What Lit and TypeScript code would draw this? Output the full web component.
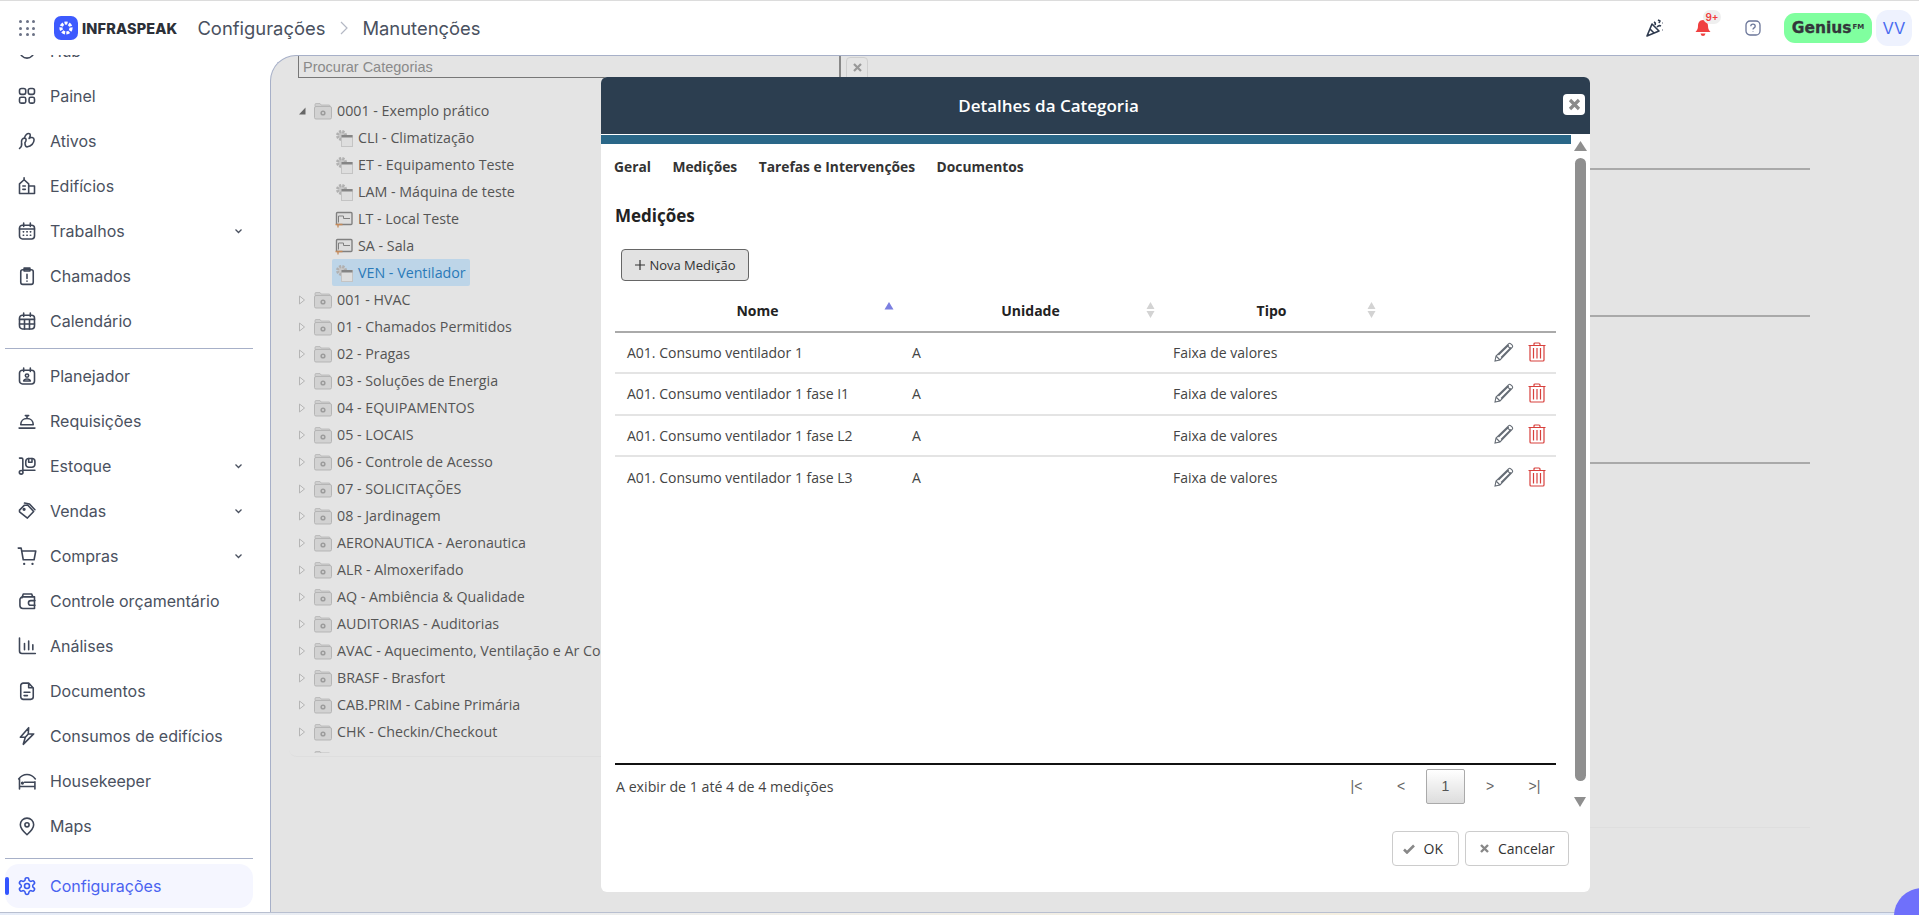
import { LitElement, html, css, svg } from "lit";
import { customElement } from "lit/decorators.js";

const ic = (d: unknown) => html`<svg class="ni" viewBox="0 0 24 24" fill="none" stroke="currentColor" stroke-width="1.9" stroke-linecap="round" stroke-linejoin="round">${d}</svg>`;

const icons: Record<string, unknown> = {
  hub: svg`<circle cx="12" cy="12" r="8.500"/>`,
  painel: svg`<rect x="3" y="3" width="7.500" height="7" rx="2.500"/><rect x="13.500" y="3" width="7.500" height="7" rx="2.500"/><rect x="3" y="13.500" width="7.500" height="7" rx="2"/><rect x="14.500" y="13.500" width="6.500" height="7" rx="2"/>`,
  ativos: svg`<path d="M3 21c2.500-2 3-4.500 2.500-7-.5-3 1-5.500 3.500-5.500 2.500 0 2.500 3 .5 5.500M9 8c1-3 3-5 5-5 2.500 0 2.500 3 .5 6M14.500 9c2-2 6-1.500 6 1.500 0 4-3.500 8-8 8.500-2 0-3-2-3-5"/>`,
  edificios: svg`<path d="M3 21V9.500l5.500-5 5.500 5V21zM14 12h7v9h-7M7 12h3M7 16h3M8.500 4.500V2"/>`,
  trabalhos: svg`<rect x="3" y="5" width="18" height="16.500" rx="3.500"/><path d="M8 2.500v4M16 2.500v4M3 9.500h18M7.500 13h.5M11.800 13h.5M16 13h.5M7.500 17h.5M11.800 17h.5M16 17h.5"/>`,
  chamados: svg`<rect x="4.500" y="4.500" width="15" height="17.500" rx="2.500"/><path d="M8.500 2.500h7v3.500h-7zM12 10v5M12 18v.2"/>`,
  calendario: svg`<rect x="3" y="5" width="18" height="16.500" rx="3.500"/><path d="M8 2.500v4M16 2.500v4M3 10h18M3 15.500h18M9 10v11.500M15 10v11.500"/>`,
  planejador: svg`<rect x="3" y="5" width="18" height="16.500" rx="3.500"/><path d="M8 2.500v4M16 2.500v4"/><circle cx="12" cy="11.500" r="2"/><path d="M8 18c.5-2 2-2.500 4-2.500s3.500.5 4 2.500z"/>`,
  requisicoes: svg`<path d="M4.500 16.500c0-4.500 3-7.500 7.500-7.500s7.500 3 7.500 7.500zM2.500 20.500h19M12 9V6M10 5.500h4"/>`,
  estoque: svg`<path d="M3 2.500h2.500c1 0 1.500.5 1.500 1.500v12.500M7 17h14.500"/><circle cx="5" cy="19.500" r="2.200"/><rect x="10.500" y="3" width="11" height="10.500" rx="3.500"/><path d="M14 3v4.500h4V3"/>`,
  vendas: svg`<path d="M3 11l6-6h4l7 7.500-7.500 8L3 13zM9 2.500l6 1 6.500 7"/><circle cx="8.500" cy="10" r="1"/>`,
  compras: svg`<path d="M1.500 2.500H5l2.500 14h13l2-10.500H5.800"/><path d="M8.500 21.500h.2M18.500 21.500h.2" stroke-width="2.600"/>`,
  controle: svg`<path d="M21 7H7a3.500 3.500 0 0 0-3.500 3.500v7A3.500 3.500 0 0 0 7 21h14zM6 8l1.500-4.500h10L19 7"/><path d="M21.500 11.500h-5a2.500 2.500 0 0 0 0 5.500h5"/>`,
  analises: svg`<path d="M3 2.500V18a3 3 0 0 0 3 3h16M9 9v7.500M14 6v10.500M19 10.500v6"/>`,
  documentos: svg`<path d="M4.500 5.500a3 3 0 0 1 3-3H14l5.500 6V19a3 3 0 0 1-3 3h-9a3 3 0 0 1-3-3zM14 2.500V8h5.500M8.500 13.500h7M8.500 17.500h4"/>`,
  consumos: svg`<path d="M14 2L4 13.500h6l-2.500 8.500L20 9.500h-6.500zM10 13.500l3.500-4" />`,
  housekeeper: svg`<path d="M2 9.500c5.500-7 14.500-7 20 0M3 9v12.500M3 18.500h18.500v3M21.500 13v5.500M9 13.500h12.500"/><circle cx="6.500" cy="14.500" r="1"/>`,
  maps: svg`<path d="M12 22.500c-4.500-4-8-7.500-8-12a8 8 0 0 1 16 0c0 4.500-3.500 8-8 12z"/><circle cx="12" cy="10.500" r="2.500"/>`,
  config: svg`<path d="M12.220 2h-.44a2 2 0 0 0-2 2v.18a2 2 0 0 1-1 1.730l-.43.250a2 2 0 0 1-2 0l-.15-.08a2 2 0 0 0-2.730.730l-.22.380a2 2 0 0 0 .730 2.730l.15.100a2 2 0 0 1 1 1.720v.510a2 2 0 0 1-1 1.740l-.15.090a2 2 0 0 0-.730 2.730l.22.380a2 2 0 0 0 2.730.730l.15-.08a2 2 0 0 1 2 0l.43.250a2 2 0 0 1 1 1.730V20a2 2 0 0 0 2 2h.44a2 2 0 0 0 2-2v-.18a2 2 0 0 1 1-1.730l.43-.25a2 2 0 0 1 2 0l.15.08a2 2 0 0 0 2.730-.730l.22-.390a2 2 0 0 0-.730-2.730l-.15-.08a2 2 0 0 1-1-1.740v-.5a2 2 0 0 1 1-1.740l.15-.09a2 2 0 0 0 .730-2.730l-.22-.38a2 2 0 0 0-2.730-.730l-.15.08a2 2 0 0 1-2 0l-.43-.25a2 2 0 0 1-1-1.730V4a2 2 0 0 0-2-2z"/><circle cx="12" cy="12" r="3"/>`,
};

const navTop: [string, string, boolean?][] = [
  ["painel", "Painel"], ["ativos", "Ativos"], ["edificios", "Edifícios"], ["trabalhos", "Trabalhos", true], ["chamados", "Chamados"], ["calendario", "Calendário"],
];
const navMid: [string, string, boolean?][] = [
  ["planejador", "Planejador"], ["requisicoes", "Requisições"], ["estoque", "Estoque", true], ["vendas", "Vendas", true], ["compras", "Compras", true], ["controle", "Controle orçamentário"], ["analises", "Análises"], ["documentos", "Documentos"], ["consumos", "Consumos de edifícios"], ["housekeeper", "Housekeeper"], ["maps", "Maps"],
];

const children: [string, string, boolean?][] = [
  ["gear", "CLI - Climatização"], ["gear", "ET - Equipamento Teste"], ["gear", "LAM - Máquina de teste"], ["map", "LT - Local Teste"], ["map", "SA - Sala"], ["gear", "VEN - Ventilador", true],
];
const roots = ["001 - HVAC", "01 - Chamados Permitidos", "02 - Pragas", "03 - Soluções de Energia", "04 - EQUIPAMENTOS", "05 - LOCAIS", "06 - Controle de Acesso", "07 - SOLICITAÇÕES", "08 - Jardinagem", "AERONAUTICA - Aeronautica", "ALR - Almoxerifado", "AQ - Ambiência & Qualidade", "AUDITORIAS - Auditorias", "AVAC - Aquecimento, Ventilação e Ar Condicionado", "BRASF - Brasfort", "CAB.PRIM - Cabine Primária", "CHK - Checkin/Checkout"];
const rows = ["A01. Consumo ventilador 1", "A01. Consumo ventilador 1 fase I1", "A01. Consumo ventilador 1 fase L2", "A01. Consumo ventilador 1 fase L3"];

const folder = html`<svg class="ti" viewBox="0 0 18 18"><path d="M1 4.500V2.500q0-1 1-1h4l1 1.500h8q1 0 1 1v1z" fill="#cfcfcf" stroke="#b0b0b0" stroke-width=".7"/><rect x=".5" y="4.500" width="17" height="12.500" rx="1.500" fill="#d2d2d2" stroke="#b5b5b5"/><circle cx="9" cy="11" r="2.600" fill="#9c9c9c"/><circle cx="9" cy="11" r="1" fill="#d8d8d8"/></svg>`;
const gear = html`<svg class="ti" viewBox="0 0 18 18"><circle cx="6.500" cy="6.500" r="4" fill="#c8c8c8" stroke="#b0b0b0" stroke-width="3" stroke-dasharray="2 1.200"/><rect x="6.500" y="6.500" width="11" height="11" fill="#dedede" stroke="#c4c4c4"/><rect x="6.500" y="6" width="11" height="2.500" fill="#858585"/></svg>`;
const mapI = html`<svg class="ti" viewBox="0 0 18 18"><rect x="1.500" y="2.500" width="15.500" height="12" rx="1" fill="#dedede" stroke="#808080" stroke-width="1.400"/><path d="M3.500 12.500V6h5v2.500h6.500" fill="none" stroke="#808080"/><path d="M.5 14.500h7M3 14v3.500" stroke="#c58a5a" stroke-width="1.300"/></svg>`;
const pencil = html`<svg class="act" viewBox="0 0 20 20" fill="none" stroke="#666d76" stroke-width="1.100"><path d="M1 19l1-5L14.500 1.800q1.200-1 2.300 0l1.400 1.400q1 1.100 0 2.300L6 18zM2 14l4 4M13 3.300L16.800 7M4.500 13L14.800 3M7 15.300L17 5.300"/></svg>`;
const trash = html`<svg class="act" viewBox="0 0 20 20" fill="none" stroke="#d8403c" stroke-width="1.200"><path d="M1.500 3.500h17M3 3.500V18q0 1 1 1h12q1 0 1-1V3.500M7 3.500V2q0-1 1-1h4q1 0 1 1v1.500M6.500 6V16.500M10 6V16.500M13.500 6V16.500"/></svg>`;
const sortBoth = html`<svg class="sort" width="9" height="16" viewBox="0 0 9 16"><path d="M4.500 0l4 7h-8zM4.500 16l4-7h-8z" fill="#d3d3d3"/></svg>`;

@customElement("app-root")
export class AppRoot extends LitElement {
  static styles = css`
    :host { display: block; height: 915px; overflow: hidden; position: relative; background: #fff; color: #333; font-family: "Open Sans", "Noto Sans", sans-serif; }
    .topline { height: 1px; background: #dcdcdc; }
    header { height: 54px; display: flex; align-items: center; background: #fff; }
    .grip { margin-left: 19px; width: 16px; height: 16px; display: grid; grid-template-columns: repeat(3, 3px); grid-template-rows: repeat(3, 3px); justify-content: space-between; align-content: space-between; }
    .grip i { background: #6b7285; border-radius: 50%; }
    .logo { margin-left: 19px; width: 24px; height: 24px; }
    .brand { margin-left: 4px; font: 800 14.500px "Inter", sans-serif; letter-spacing: .15px; color: #2c3038; }
    .crumb { font: 400 18.400px "Inter", sans-serif; color: #4a5160; }
    .crumb.first { margin-left: 20px; }
    .sep { margin: 0 14px 0 15px; width: 8px; height: 14px; }
    .right { margin-left: auto; display: flex; align-items: center; margin-right: 7px; }
    .r-ic { width: 18px; height: 18px; display: block; }
    .party { margin-right: 30px; }
    .bell { position: relative; margin-right: 33px; width: 18px; height: 18px; }
    .badge { position: absolute; left: 9px; top: -9px; width: 18px; height: 14px; border-radius: 7px; background: #efefef; color: #f03a3a; font: 600 10px/14px "Inter", sans-serif; text-align: center; }
    .help { margin-right: 23px; width: 16px; height: 16px; }
    .genius { width: 88px; height: 30px; border-radius: 11px; background: #80ff9f; color: #33363b; font: 700 15.500px/30px "DejaVu Sans", sans-serif; display: flex; justify-content: center; align-items: center; margin-right: 4px; -webkit-text-stroke: .3px #33363b; }
    .genius span { font-size: 7px; margin-left: 1px; margin-top: -2px; -webkit-text-stroke: 0; }
    .vv { width: 36px; height: 36px; border-radius: 12px; background: #eef2fe; color: #4a6cf0; font: 400 16.500px/36px "Inter", sans-serif; text-align: center; }

    main { display: flex; height: 860px; }
    aside { width: 270px; flex: none; overflow: hidden; background: #fff; }
    .side-in { margin-top: -27px; padding: 0 17px 0 5px; }
    .nav { height: 45px; display: flex; align-items: center; padding-left: 12px; font: 400 16px "Inter", sans-serif; color: #4a5160; }
    .ni { width: 20px; height: 20px; margin-right: 13px; color: #3e4657; flex: none; }
    .chev { margin-left: auto; margin-right: 10px; width: 9px; height: 6px; }
    hr { border: 0; border-top: 1px solid #a7b0c8; margin: 5px 0 4px; }
    hr.two { margin: 10px 0 5px; }
    .nav.active { height: 44px; position: relative; background: #f5f6ff; border-radius: 14px; color: #4a63f0; }
    .nav.active .ni { color: #3a5af0; }
    .nav.active::before { content: ""; position: absolute; left: 0; top: 13px; width: 4px; height: 18px; border-radius: 2px; background: #3355ff; }

    .content { flex: 1; background: #e4e4e4; border-top: 1px solid #a7b0c8; border-left: 1px solid #a7b0c8; border-top-left-radius: 26px; position: relative; overflow: hidden; }
    .search { display: flex; align-items: flex-start; margin-left: 27px; }
    .search-in { width: 543px; height: 22px; box-sizing: border-box; border-left: 1px solid #777; border-bottom: 1px solid #777; border-right: 2px solid #888; font: 14.500px/22px "Liberation Sans", sans-serif; color: #8a8a8a; padding: 0 4px; background: #e4e4e4; }
    .search-x { margin: 1px 0 0 5px; width: 22px; height: 21px; box-sizing: border-box; border: 1px solid #cfcfcf; border-radius: 4px 4px 0 0; display: flex; align-items: center; justify-content: center; }
    .panel { margin-left: 18px; padding: 0 0 3px 9px; margin-top: 19px; width: 600px; border-bottom: 1px solid #dedede; border-radius: 0 0 8px 8px; }
    .tree { height: 656px; overflow: hidden; }
    .node { height: 27px; display: flex; align-items: center; font: 400 14.250px "Open Sans", sans-serif; white-space: nowrap; color: #555; }
    .tw { width: 8px; height: 10px; margin-right: 8px; flex: none; }
    .ti { width: 18px; height: 18px; margin-right: 5px; flex: none; }
    .node.kid { padding-left: 37px; }
    .sel { height: 27px; background: #bdd5e8; border-radius: 2px; color: #2a7ab8; padding: 0 4px 0 3px; display: flex; align-items: center; margin-left: -3px; }
    .lines { position: absolute; left: 1319px; top: 112px; width: 220px; }
    .lines div { height: 147px; border-top: 2px solid #a9a9a9; box-sizing: border-box; }
    .faint { position: absolute; left: 1319px; top: 771px; width: 220px; border-top: 1px solid #dedede; }

    .strip { position: absolute; left: 0; right: 0; bottom: 0; height: 3px; background: linear-gradient(90deg, #e6ecf8, #f5efe0 70%, #dfe8f8); border-top: 1px solid #b8bfd0; box-sizing: border-box; z-index: 2; }
    .fab { position: absolute; left: 1894px; top: 888px; width: 56px; height: 56px; border-radius: 50%; background: #6f70fb; z-index: 3; }

    .modal { position: absolute; left: 601px; top: 77px; width: 989px; height: 815px; background: #fff; border-radius: 6px; overflow: hidden; font-family: "Open Sans", sans-serif; z-index: 1; }
    .m-head { height: 57px; padding-right: 94px; box-sizing: border-box; background: #2c3e50; color: #fff; font-weight: 600; font-size: 17px; display: flex; align-items: center; justify-content: center; position: relative; }
    .close { position: absolute; right: 5px; top: 17px; width: 22px; height: 21px; background: #fff; border-radius: 4px; display: flex; align-items: center; justify-content: center; }
    .m-body { display: flex; height: 757px; margin-top: 1px; }
    .m-main { flex: 1; min-width: 0; display: flex; flex-direction: column; }
    .bar { height: 9px; background: #2a6788; }
    .tabs { display: flex; gap: 21.500px; margin: 9px 0 0 13px; font-weight: 700; font-size: 13.800px; color: #333; height: 26px; align-items: center; }
    h3 { margin: 25px 0 0 14px; font-size: 17px; font-weight: 700; color: #222; height: 24px; line-height: 24px; }
    .new { margin: 21px 0 0 20px; width: 128px; height: 32px; flex: none; box-sizing: border-box; background: #e2e2e2; border: 1px solid #666; border-radius: 4px; display: flex; align-items: center; justify-content: center; font-size: 13px; color: #333; gap: 3px; }
    .table { margin: 10px 15px 0 14px; }
    .tr { display: grid; grid-template-columns: 285px 261px 221px 1fr; align-items: center; font-size: 14px; color: #444; box-sizing: border-box; }
    .tr.h { height: 42px; border-bottom: 2px solid #aaa; color: #222; font-weight: 700; }
    .tr.r { height: 41.300px; border-bottom: 2px solid #e4e4e4; }
    .tr.r:last-child { border-bottom: 0; }
    .tr.r > span { padding-left: 12px; }
    .th { position: relative; text-align: center; line-height: 20px; }
    .sort { position: absolute; right: 6px; top: 1px; }
    .acts { display: flex; justify-content: flex-end; align-items: center; gap: 13px; padding: 0 9px 2px 0; }
    .act { width: 20px; height: 20px; flex: none; }
    .spacer { flex: 1; border-bottom: 2px solid #111; margin: 0 15px 0 14px; }
    .foot { margin: 3px 15px 0 15px; height: 36px; display: flex; align-items: center; font-size: 14.200px; color: #444; }
    .pager { margin-left: auto; display: flex; align-items: center; gap: 5.500px; margin-right: 2px; }
    .pg { width: 39px; height: 35px; box-sizing: border-box; text-align: center; font: 400 14px/35px "Liberation Sans", sans-serif; color: #666; }
    .pg.cur { border: 1px solid #aaa; border-radius: 2px; background: linear-gradient(#fff, #ddd); color: #555; line-height: 33px; }
    .btns { display: flex; justify-content: flex-end; gap: 6.500px; margin-right: 2.500px; padding-top: 27px; height: 88px; box-sizing: border-box; }
    .btn { height: 35px; box-sizing: border-box; border: 1px solid #ccc; border-radius: 4px; display: flex; align-items: center; font-size: 14px; color: #333; gap: 9px; background: #fff; }
    .btn.ok { width: 67px; padding-left: 10px; }
    .btn.ca { width: 103.500px; padding-left: 14px; }
    .scroll { width: 19px; flex: none; position: relative; }
    .s-thumb { position: absolute; left: 4px; top: 23px; width: 11px; height: 623px; background: #8f8f8f; border-radius: 6px; }
    .s-up { position: absolute; left: 3px; top: 6px; width: 13px; height: 10px; }
    .s-down { position: absolute; left: 3px; top: 662px; width: 12px; height: 10px; }
  `;

  private tri(open: boolean) {
    return open
      ? html`<svg class="tw" viewBox="0 0 8 10"><path d="M1 8.500h6.500V1.500z" fill="#666"/></svg>`
      : html`<svg class="tw" viewBox="0 0 8 10"><path d="M1.500 1l5 4-5 4z" fill="#e8e8e8" stroke="#b5b5b5"/></svg>`;
  }

  private nav(n: [string, string, boolean?]) {
    return html`<div class="nav">${ic(icons[n[0]])}<span>${n[1]}</span>${n[2] ? html`<svg class="chev" viewBox="0 0 9 6" fill="none" stroke="#4a5160" stroke-width="1.300"><path d="M1.500 1.500L4.500 4.500 7.500 1.500"/></svg>` : ""}</div>`;
  }

  render() {
    return html`
      <div class="topline"></div>
      <header>
        <div class="grip">${Array.from({ length: 9 }, () => html`<i></i>`)}</div>
        <svg class="logo" viewBox="0 0 24 24"><rect width="24" height="24" rx="7" fill="#3d5afe"/><circle cx="12" cy="12" r="5" fill="none" stroke="#fff" stroke-width="3.200" stroke-dasharray="3 1.300"/></svg>
        <span class="brand">INFRASPEAK</span>
        <span class="crumb first">Configurações</span>
        <svg class="sep" viewBox="0 0 8 14" fill="none" stroke="#b4b8c4" stroke-width="1.200"><path d="M1 1l6 6-6 6"/></svg>
        <span class="crumb">Manutenções</span>
        <div class="right">
          <svg class="party r-ic" viewBox="0 0 18 18" fill="none" stroke="#2e3a4e" stroke-width="1.600" stroke-linejoin="round"><path d="M1 17l5-12 7 7zM4 10l4 4M8 3q2 1 1 3M12 1l2 1-1 2M11 8q2-2 4-1M16 4h.5M16 11h.5"/></svg>
          <div class="bell"><svg class="r-ic" viewBox="0 0 18 18" fill="#f04040"><path d="M9 1c3.500 0 5 3 5 6 0 3 1 4 2.500 6h-15C3 11 4 10 4 7c0-3 1.500-6 5-6zM6.500 14.500h5q-.5 2.500-2.500 2.500t-2.500-2.500z"/></svg><span class="badge">9+</span></div>
          <svg class="help r-ic" viewBox="0 0 16 16" fill="none" stroke="#6b7699" stroke-width="1.300"><rect x="1" y="1" width="14" height="14" rx="4"/><path d="M5.800 6.200C5.800 5 6.800 4.200 8 4.200s2.200.8 2.200 2c0 1.700-2.200 1.600-2.200 3.300M8 11.300v.5"/></svg>
          <div class="genius">Genius<span>FM</span></div>
          <div class="vv">VV</div>
        </div>
      </header>
      <main>
        <aside>
          <div class="side-in">
            <div class="nav">${ic(icons.hub)}<span>Hub</span></div>
            ${navTop.map((n) => this.nav(n))}
            <hr />
            ${navMid.map((n) => this.nav(n))}
            <hr class="two" />
            <div class="nav active">${ic(icons.config)}<span>Configurações</span></div>
          </div>
        </aside>
        <section class="content">
          <div class="search"><div class="search-in">Procurar Categorias</div><div class="search-x"><svg width="9" height="9" viewBox="0 0 9 9" stroke="#999" stroke-width="2.200"><path d="M1 1l7 7M8 1L1 8"/></svg></div></div>
          <div class="panel"><div class="tree">
            <div class="node">${this.tri(true)}${folder}<span>0001 - Exemplo prático</span></div>
            ${children.map((c) => html`<div class="node kid">${c[2]
              ? html`<div class="sel">${c[0] === "gear" ? gear : mapI}<span>${c[1]}</span></div>`
              : html`${c[0] === "gear" ? gear : mapI}<span>${c[1]}</span>`}</div>`)}
            ${roots.map((r) => html`<div class="node">${this.tri(false)}${folder}<span>${r}</span></div>`)}
            <div class="node">${this.tri(false)}${folder}</div>
          </div></div>
          <div class="lines"><div></div><div></div><div></div></div>
          <div class="faint"></div>
        </section>
      </main>
      <div class="modal">
        <div class="m-head">Detalhes da Categoria<div class="close"><svg width="13" height="13" viewBox="0 0 13 13" stroke="#8a8a8a" stroke-width="3.200"><path d="M2 2l9 9M11 2l-9 9"/></svg></div></div>
        <div class="m-body">
          <div class="m-main">
            <div class="bar"></div>
            <div class="tabs"><span>Geral</span><span>Medições</span><span>Tarefas e Intervenções</span><span>Documentos</span></div>
            <h3>Medições</h3>
            <div class="new"><svg width="12" height="12" viewBox="0 0 12 12" stroke="#333" stroke-width="1.200"><path d="M6 1v10M1 6h10"/></svg>Nova Medição</div>
            <div class="table">
              <div class="tr h">
                <div class="th">Nome<svg class="sort" width="10" height="8" viewBox="0 0 10 8"><path d="M5 0l4.500 7.500h-9z" fill="#7b7fe0"/></svg></div>
                <div class="th">Unidade${sortBoth}</div>
                <div class="th">Tipo${sortBoth}</div>
                <div></div>
              </div>
              ${rows.map((r) => html`<div class="tr r"><span>${r}</span><span>A</span><span>Faixa de valores</span><div class="acts">${pencil}${trash}</div></div>`)}
            </div>
            <div class="spacer"></div>
            <div class="foot">A exibir de 1 até 4 de 4 medições
              <div class="pager"><span class="pg">|&lt;</span><span class="pg">&lt;</span><span class="pg cur">1</span><span class="pg">&gt;</span><span class="pg">&gt;|</span></div>
            </div>
            <div class="btns">
              <div class="btn ok"><svg width="12" height="10" viewBox="0 0 12 10" fill="none" stroke="#888" stroke-width="2.600"><path d="M1 5.500l3 3 7-7"/></svg>OK</div>
              <div class="btn ca"><svg width="9" height="9" viewBox="0 0 9 9" stroke="#888" stroke-width="2.400"><path d="M1 1l7 7M8 1L1 8"/></svg>Cancelar</div>
            </div>
          </div>
          <div class="scroll">
            <svg class="s-up" viewBox="0 0 13 10"><path d="M6.500 0L13 10H0z" fill="#8f8f8f"/></svg>
            <div class="s-thumb"></div>
            <svg class="s-down" viewBox="0 0 12 10"><path d="M0 0h12L6 10z" fill="#8f8f8f"/></svg>
          </div>
        </div>
      </div>
      <div class="fab"></div>
      <div class="strip"></div>
    `;
  }
}
